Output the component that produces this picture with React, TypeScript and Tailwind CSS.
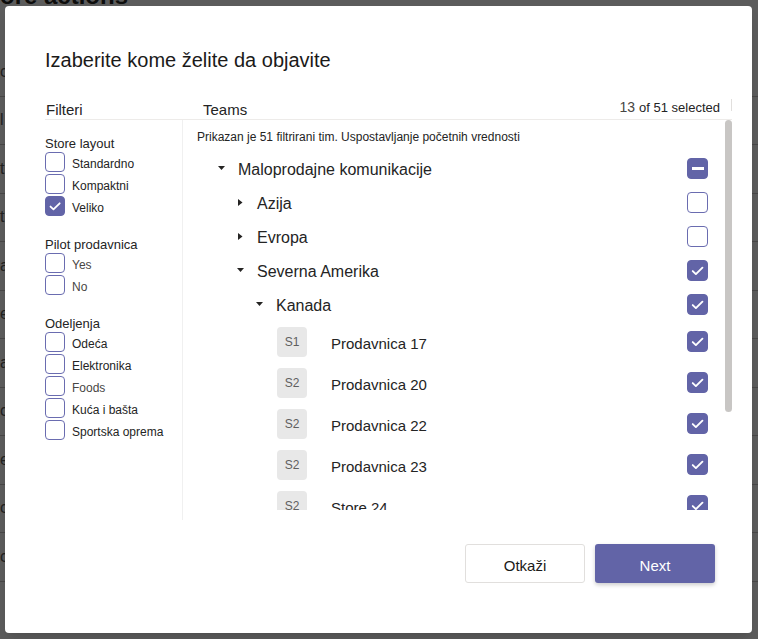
import React from 'react';

type CheckState = 'on' | 'off' | 'mixed';

const font = { fontFamily: '"Liberation Sans", Arial, sans-serif' };

function CheckBox({ state, size = 20 }: { state: CheckState; size?: number }) {
  const filled = state !== 'off';
  return (
    <span
      className={`flex shrink-0 items-center justify-center rounded-[4px] border ${
        filled ? 'border-[#6264a7] bg-[#6264a7]' : 'border-[#6a6cb0] bg-white'
      }`}
      style={{ width: size, height: size }}
    >
      {state === 'on' && (
        <svg width={size} height={size} viewBox="0 0 20 20" fill="none">
          <path d="M5 10.6l3.3 3.2L15.2 7" stroke="white" strokeWidth="2" strokeLinecap="round" strokeLinejoin="round" />
        </svg>
      )}
      {state === 'mixed' && <span className="block h-[3px] w-[12px] bg-white" />}
    </span>
  );
}

function Caret({ open }: { open: boolean }) {
  return (
    <span className="flex w-[20px] shrink-0 items-center">
      {open ? (
        <svg width="7" height="4" viewBox="0 0 7 4">
          <polygon points="0,0 7,0 3.5,4" fill="#252423" />
        </svg>
      ) : (
        <svg width="5" height="7" viewBox="0 0 5 7" className="ml-[1px]">
          <polygon points="0,0 4.5,3.5 0,7" fill="#252423" />
        </svg>
      )}
    </span>
  );
}

const filterGroups = [
  {
    title: 'Store layout',
    items: [
      { label: 'Standardno', state: 'off' as CheckState, muted: false },
      { label: 'Kompaktni', state: 'off' as CheckState, muted: false },
      { label: 'Veliko', state: 'on' as CheckState, muted: false },
    ],
  },
  {
    title: 'Pilot prodavnica',
    items: [
      { label: 'Yes', state: 'off' as CheckState, muted: true },
      { label: 'No', state: 'off' as CheckState, muted: true },
    ],
  },
  {
    title: 'Odeljenja',
    items: [
      { label: 'Odeća', state: 'off' as CheckState, muted: false },
      { label: 'Elektronika', state: 'off' as CheckState, muted: false },
      { label: 'Foods', state: 'off' as CheckState, muted: true },
      { label: 'Kuća i bašta', state: 'off' as CheckState, muted: false },
      { label: 'Sportska oprema', state: 'off' as CheckState, muted: false },
    ],
  },
];

const groups = [
  { label: 'Maloprodajne komunikacije', open: true, state: 'mixed' as CheckState, indent: 'pl-[35px]' },
  { label: 'Azija', open: false, state: 'off' as CheckState, indent: 'pl-[54px]' },
  { label: 'Evropa', open: false, state: 'off' as CheckState, indent: 'pl-[54px]' },
  { label: 'Severna Amerika', open: true, state: 'on' as CheckState, indent: 'pl-[54px]' },
  { label: 'Kanada', open: true, state: 'on' as CheckState, indent: 'pl-[73px]' },
];

const stores = [
  { code: 'S1', name: 'Prodavnica 17' },
  { code: 'S2', name: 'Prodavnica 20' },
  { code: 'S2', name: 'Prodavnica 22' },
  { code: 'S2', name: 'Prodavnica 23' },
  { code: 'S2', name: 'Store 24' },
];

const pageRows = ['c', 'l', 't', 't', 'a', 'e', 'a', 'c', 'e', 'c', 'c'];

export default function App() {
  return (
    <div className="relative h-[639px] w-[758px] overflow-hidden bg-white text-[#242424]" style={font}>
      {/* page behind the dialog */}
      <div className="ml-[-20px] mt-[-16px] text-[24px] font-bold leading-[24px] text-[#252423]">More actions</div>
      <div className="mt-[40px]">
        {pageRows.map((r, i) => (
          <div key={i} className="flex h-[48.5px] items-center border-b border-[#c8c6c4] text-[16px] text-[#605e5c]">
            <span>{r}</span>
          </div>
        ))}
      </div>

      {/* dim layer */}
      <div className="absolute inset-0 bg-black/[0.64]" />

      {/* dialog */}
      <div className="absolute left-[5px] top-[6px] flex h-[627px] w-[747px] flex-col rounded-[4px] bg-white pl-[40px] pt-[42px] shadow-lg">
        <h1 className="text-[20px] font-normal leading-[24px] text-[#1b1a19]">Izaberite kome želite da objavite</h1>

        <div className="mt-[28px] flex h-[20px] w-[687px] items-end border-b border-[#edebe9]">
          <div className="w-[158px] pl-[1px] text-[15px] leading-[18px]">Filteri</div>
          <div className="flex-1 text-[15px] leading-[18px]">Teams</div>
          <div className="mb-[3px] flex items-baseline text-[13px] leading-[16px]">
            <span className="mr-[4px] text-[14px] text-[#484644]">13</span>
            <span>of 51 selected</span>
          </div>
          <span className="mb-[8px] ml-[11px] h-[12px] w-[1px] bg-[#e1dfdd]" />
        </div>

        <div className="flex h-[400px] w-[687px]">
          {/* filters */}
          <div className="w-[138px] shrink-0 border-r border-[#f0f0f0] pt-[16px]">
            {filterGroups.map((g, gi) => (
              <div key={g.title} className={gi > 0 ? 'mt-[21px]' : ''}>
                <div className="text-[13px] leading-[16px]">{g.title}</div>
                <div className="flex flex-col gap-[2px]">
                  {g.items.map((it) => (
                    <div key={it.label} className="flex items-center gap-[7px]">
                      <CheckBox state={it.state} />
                      <span className={`pt-[4px] text-[12px] leading-[14px] ${it.muted ? 'text-[#484644]' : 'text-[#242424]'}`}>
                        {it.label}
                      </span>
                    </div>
                  ))}
                </div>
              </div>
            ))}
          </div>

          {/* team tree */}
          <div className="flex h-[390px] flex-1 overflow-hidden">
            <div className="flex-1">
              <p className="pl-[14px] pt-[9px] text-[12px] leading-[16px] text-[#242424]">
                Prikazan je 51 filtrirani tim. Uspostavljanje početnih vrednosti
              </p>
              <div className="mt-[6px]">
                {groups.map((g) => (
                  <div key={g.label} className={`flex h-[34px] items-center pr-[17px] ${g.indent}`}>
                    <Caret open={g.open} />
                    <span className="flex-1 pt-[4px] text-[16px] leading-[18px]">{g.label}</span>
                    <CheckBox state={g.state} size={21} />
                  </div>
                ))}
                {stores.map((s) => (
                  <div key={s.name} className="flex h-[41px] items-center pl-[94px] pr-[17px]">
                    <span className="flex h-[30px] w-[30px] shrink-0 items-center justify-center rounded-[4px] bg-[#e8e8e8] text-[12px] text-[#5f5f5f]">
                      {s.code}
                    </span>
                    <span className="ml-[24px] flex-1 pt-[5px] text-[15px] leading-[18px]">{s.name}</span>
                    <CheckBox state="on" size={21} />
                  </div>
                ))}
              </div>
            </div>
            <div className="w-[7px] shrink-0">
              <div className="h-[292px] w-[7px] rounded-full bg-[#c8c6c4]" />
            </div>
          </div>
        </div>

        <div className="mt-[24px] flex justify-end gap-[10px] pr-[37px]">
          <button className="flex h-[39px] w-[120px] items-center justify-center rounded-[3px] border border-[#e1dfdd] bg-white pt-[5px] text-[15px] text-[#1b1a19]">
            Otkaži
          </button>
          <button className="flex h-[39px] w-[120px] items-center justify-center rounded-[3px] bg-[#6264a7] pt-[5px] text-[15px] text-white shadow-[0_2px_4px_rgba(0,0,0,0.2)]">
            Next
          </button>
        </div>
      </div>
    </div>
  );
}
